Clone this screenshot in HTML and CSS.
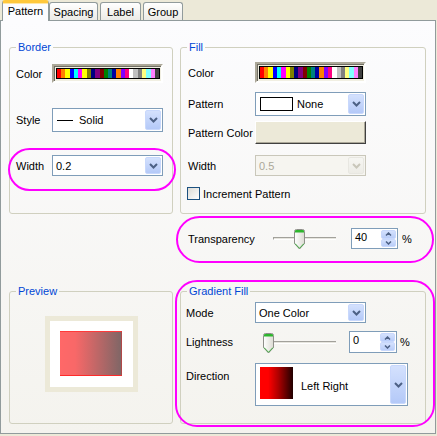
FILE: index.html
```html
<!DOCTYPE html>
<html>
<head>
<meta charset="utf-8">
<link rel="stylesheet" href="styles.css">
</head>
<body>
<div class="tabs">
  <div class="tab active">Pattern</div>
  <div class="tab t-spacing">Spacing</div>
  <div class="tab t-label">Label</div>
  <div class="tab t-group">Group</div>
</div>
<div class="panel">
  <fieldset class="group g-border">
    <legend>Border</legend>
    <div class="row b-color"><span class="lbl">Color</span><div class="swatch"><div class="stripes"></div></div></div>
    <div class="row b-style"><span class="lbl">Style</span>
      <div class="combo"><span class="line"></span><span class="val">Solid</span>
        <span class="ddbtn"><svg width="9" height="6" viewBox="0 0 9 6"><path d="M1 1l3.5 3.5L8 1" fill="none" stroke="#4D6185" stroke-width="2"/></svg></span></div>
    </div>
    <div class="row b-width"><span class="lbl">Width</span>
      <div class="combo"><span class="val pad">0.2</span>
        <span class="ddbtn"><svg width="9" height="6" viewBox="0 0 9 6"><path d="M1 1l3.5 3.5L8 1" fill="none" stroke="#4D6185" stroke-width="2"/></svg></span></div>
    </div>
  </fieldset>

  <fieldset class="group g-fill">
    <legend>Fill</legend>
    <div class="row f-color"><span class="lbl">Color</span><div class="swatch"><div class="stripes"></div></div></div>
    <div class="row f-pattern"><span class="lbl">Pattern</span>
      <div class="combo"><span class="pbox"></span><span class="val">None</span>
        <span class="ddbtn"><svg width="9" height="6" viewBox="0 0 9 6"><path d="M1 1l3.5 3.5L8 1" fill="none" stroke="#4D6185" stroke-width="2"/></svg></span></div>
    </div>
    <div class="row f-pcolor"><span class="lbl">Pattern Color</span><div class="pbtn"></div></div>
    <div class="row f-width"><span class="lbl">Width</span>
      <div class="combo disabled"><span class="val pad">0.5</span>
        <span class="ddbtn"><svg width="9" height="6" viewBox="0 0 9 6"><path d="M1 1l3.5 3.5L8 1" fill="none" stroke="#C9C7BA" stroke-width="2"/></svg></span></div>
    </div>
    <div class="row f-check"><span class="check"></span><span>Increment Pattern</span></div>
  </fieldset>

  <div class="row t-row">
    <span class="lbl t-lbl">Transparency</span>
    <div class="slider s-trans">
      <div class="track"></div>
      <svg class="thumb th-trans" width="11" height="21" viewBox="0 0 11 21"><defs><linearGradient id="tg1" x1="0" x2="1" y1="0" y2="0"><stop offset="0" stop-color="#FFFFFF"/><stop offset="1" stop-color="#DCDBD3"/></linearGradient></defs><path d="M0.5 2.5Q0.5 0.5 2.5 0.5H8.5Q10.5 0.5 10.5 2.5V14.5L5.5 20L0.5 14.5Z" fill="url(#tg1)" stroke="#8F8F8A"/><path d="M1 2Q1 1 2.5 1H8.5Q10 1 10 2V3.5H1Z" fill="#2DB52D"/><path d="M1 14.5L5.5 19.3L10 14.5" fill="none" stroke="#3CA83C"/></svg>
    </div>
    <div class="spin sp-trans"><span class="sval">40</span><span class="sbtns"><span class="sb"><svg width="7" height="4" viewBox="0 0 7 4"><path d="M1 3.5l2.5-2.5 2.5 2.5" fill="none" stroke="#4D6185" stroke-width="1.5"/></svg></span><span class="sb"><svg width="7" height="4" viewBox="0 0 7 4"><path d="M1 0.5l2.5 2.5 2.5-2.5" fill="none" stroke="#4D6185" stroke-width="1.5"/></svg></span></span></div>
    <span class="pct p-trans">%</span>
  </div>

  <fieldset class="group g-preview">
    <legend>Preview</legend>
    <div class="pv-frame"><div class="pv-rect"></div></div>
  </fieldset>

  <fieldset class="group g-grad">
    <legend>Gradient Fill</legend>
    <div class="row g-mode"><span class="lbl">Mode</span>
      <div class="combo"><span class="val pad">One Color</span>
        <span class="ddbtn"><svg width="9" height="6" viewBox="0 0 9 6"><path d="M1 1l3.5 3.5L8 1" fill="none" stroke="#4D6185" stroke-width="2"/></svg></span></div>
    </div>
    <div class="row g-light"><span class="lbl">Lightness</span>
      <div class="slider s-light">
        <div class="track"></div>
        <svg class="thumb th-light" width="11" height="21" viewBox="0 0 11 21"><defs><linearGradient id="tg2" x1="0" x2="1" y1="0" y2="0"><stop offset="0" stop-color="#FFFFFF"/><stop offset="1" stop-color="#DCDBD3"/></linearGradient></defs><path d="M0.5 2.5Q0.5 0.5 2.5 0.5H8.5Q10.5 0.5 10.5 2.5V14.5L5.5 20L0.5 14.5Z" fill="url(#tg2)" stroke="#8F8F8A"/><path d="M1 2Q1 1 2.5 1H8.5Q10 1 10 2V3.5H1Z" fill="#2DB52D"/><path d="M1 14.5L5.5 19.3L10 14.5" fill="none" stroke="#3CA83C"/></svg>
      </div>
      <div class="spin sp-light"><span class="sval">0</span><span class="sbtns"><span class="sb"><svg width="7" height="4" viewBox="0 0 7 4"><path d="M1 3.5l2.5-2.5 2.5 2.5" fill="none" stroke="#4D6185" stroke-width="1.5"/></svg></span><span class="sb"><svg width="7" height="4" viewBox="0 0 7 4"><path d="M1 0.5l2.5 2.5 2.5-2.5" fill="none" stroke="#4D6185" stroke-width="1.5"/></svg></span></span></div>
      <span class="pct p-light">%</span>
    </div>
    <div class="row g-dir"><span class="lbl dir-lbl">Direction</span>
      <div class="combo dcombo"><span class="dswatch"></span><span class="val dval">Left Right</span>
        <span class="ddbtn"><svg width="9" height="6" viewBox="0 0 9 6"><path d="M1 1l3.5 3.5L8 1" fill="none" stroke="#4D6185" stroke-width="2"/></svg></span></div>
    </div>
  </fieldset>

  <div class="mark m-width"></div>
  <div class="mark m-trans"></div>
  <div class="mark m-grad"></div>
</div>
</body>
</html>
```
FILE: styles.css
```css
html, body {
  margin: 0;
  padding: 0;
}
body {
  background: #ECE9D8;
  font-family: "Liberation Sans", Arial, sans-serif;
  font-size: 11px;
  color: #000;
  width: 437px;
  height: 436px;
  overflow: hidden;
}

/* tabs */
.tabs {
  display: flex;
  align-items: flex-end;
  height: 20px;
  padding-left: 2px;
}
.tab {
  box-sizing: border-box;
  height: 18px;
  border: 1px solid #919B9C;
  border-bottom: none;
  border-radius: 3px 3px 0 0;
  background: linear-gradient(#FFFFFF, #ECEBE6);
  display: flex;
  align-items: center;
  justify-content: center;
  padding-top: 1px;
}
.tab.active {
  position: relative;
  z-index: 2;
  width: 47px;
  height: 21px;
  margin-bottom: -1px;
  border-top: 3px solid #FFC83C;
  box-shadow: inset 0 1px 0 #FFE6A6;
  background: #FCFCFE;
  padding-top: 0;
  padding-bottom: 3px;
}
.t-spacing { width: 49px; }
.t-label { width: 41px; margin-left: 2px; }
.t-group { width: 40px; margin-left: 2px; }

/* panel */
.panel {
  position: relative;
  box-sizing: border-box;
  width: 436px;
  height: 414px;
  border: 1px solid #919B9C;
  background: linear-gradient(#FCFCFE, #F4F3EE);
  display: grid;
  grid-template-columns: 164px 246px;
  grid-template-rows: 173px 71px 139px;
  column-gap: 7px;
  padding: 20px 0 0 8px;
}

.group {
  box-sizing: border-box;
  margin: 0;
  min-width: 0;
  height: 100%;
  border: 1px solid #D0D0BF;
  border-radius: 3px;
  padding: 0;
}
.group legend {
  color: #0046D5;
  line-height: 12px;
  height: 12px;
  padding: 0 2px;
}
.g-border { grid-column: 1; grid-row: 1; padding-left: 6px; }
.g-fill { grid-column: 2; grid-row: 1; padding-left: 7px; }
.t-row { grid-column: 2; grid-row: 2; }
.g-preview { grid-column: 1; grid-row: 3; padding-left: 6px; }
.g-grad { grid-column: 2; grid-row: 3; padding-left: 5px; }
.g-fill legend { margin-left: -1px; }
.g-grad legend { margin-left: 1px; }

.row {
  display: flex;
  align-items: center;
}
.lbl { flex: none; }
.g-border .lbl { width: 36px; }
.g-fill .lbl { width: 67px; }
.g-grad .lbl { width: 69px; }

.b-color { margin-top: 11px; height: 19px; }
.b-style { margin-top: 25px; height: 24px; }
.b-width { margin-top: 23px; height: 21px; }

.f-color { margin-top: 9px; height: 21px; }
.f-pattern { margin-top: 9px; height: 24px; }
.f-pcolor { margin-top: 5px; height: 23px; }
.f-width { margin-top: 11px; height: 21px; }
.f-check { margin-top: 11px; height: 13px; margin-left: -1px; }

.t-row { margin-top: 14px; height: 21px; padding-left: 8px; align-self: start; }
.t-lbl { width: 85px; }

.g-mode { margin-top: 5px; height: 21px; }
.g-light { margin-top: 8px; height: 22px; }
.g-dir { margin-top: 10px; height: 43px; align-items: flex-start; }
.dir-lbl { padding-top: 7px; }

/* color swatch */
.swatch {
  box-sizing: border-box;
  width: 111px;
  height: 100%;
  border: 2px solid;
  border-color: #ACA899 #FFFFFF #FFFFFF #ACA899;
  box-shadow: inset 1px 1px 0 #716F64;
  background: #F1EFE2;
  padding: 2px 1px 2px 2px;
  display: flex;
}
.stripes {
  flex: 1;
  border: 1px solid #000;
  background: linear-gradient(to right,
    #FF0000 0 4.17%, #FF8000 4.17% 8.33%, #FFFF00 8.33% 12.5%, #0000FF 12.5% 16.67%,
    #00FFFF 16.67% 20.83%, #FF00FF 20.83% 25%, #FFFF00 25% 29.17%, #808000 29.17% 33.33%,
    #000080 33.33% 37.5%, #800080 37.5% 41.67%, #800000 41.67% 45.83%, #008000 45.83% 50%,
    #008080 50% 54.17%, #0000A0 54.17% 58.33%, #FF8000 58.33% 62.5%, #8000FF 62.5% 66.67%,
    #FF0080 66.67% 70.83%, #FFFFFF 70.83% 75%, #C0C0C0 75% 79.17%, #808080 79.17% 83.33%,
    #FFFF80 83.33% 87.5%, #80FFFF 87.5% 91.67%, #FF80FF 91.67% 95.83%, #404040 95.83% 100%);
}

/* combo */
.combo {
  box-sizing: border-box;
  width: 111px;
  height: 100%;
  border: 1px solid #7F9DB9;
  background: #FFFFFF;
  display: flex;
  align-items: center;
  padding: 1px;
}
.combo .val { flex: 1; }
.combo .pad { padding-left: 2px; }
.ddbtn {
  box-sizing: border-box;
  flex: none;
  width: 16px;
  align-self: stretch;
  border: 1px solid #C8D8FC;
  border-radius: 2px;
  background: linear-gradient(#D4E1FD, #B4C9F8);
  display: flex;
  align-items: center;
  justify-content: center;
}
.combo.disabled {
  border-color: #C9C7BA;
  background: #F6F5F0;
  color: #ACA899;
}
.combo.disabled .ddbtn {
  border-color: #E8E7E1;
  background: linear-gradient(#F6F6F2, #EDECE6);
}
.line {
  width: 16px;
  height: 1px;
  background: #000;
  margin: 0 6px 0 3px;
  flex: none;
}
.pbox {
  box-sizing: border-box;
  width: 33px;
  height: 14px;
  border: 1px solid #000;
  background: #fff;
  margin: 0 4px 0 3px;
  flex: none;
}
.dcombo { width: 153px; align-items: flex-start; }
.dswatch {
  flex: none;
  width: 33px;
  height: 32px;
  margin: 2px 8px 0 3px;
  background: linear-gradient(to right, #FF0000 25%, #B00000 55%, #200000 100%);
}
.dval { align-self: center; padding-top: 2px; }
.dcombo .ddbtn { align-self: stretch; }

/* pattern color button */
.pbtn {
  box-sizing: border-box;
  width: 111px;
  height: 100%;
  background: #ECE9D8;
  border: 1px solid;
  border-color: #FFFFFF #404040 #404040 #FFFFFF;
  box-shadow: inset -1px -1px 0 #ACA899;
}

/* checkbox */
.check {
  box-sizing: border-box;
  width: 13px;
  height: 13px;
  border: 1px solid #1C5180;
  background: linear-gradient(135deg, #DCDBD5, #FFFFFF);
  margin-right: 3px;
}

/* slider */
.slider {
  position: relative;
  flex: none;
  height: 100%;
  display: flex;
  align-items: center;
}
.s-trans { width: 63px; }
.s-light { width: 73px; margin-left: 8px; }
.track {
  box-sizing: border-box;
  width: 100%;
  height: 3px;
  border-top: 1px solid #A2A19B;
  border-left: 1px solid #A2A19B;
  border-bottom: 1px solid #FFFFFF;
  background: #E6E5DE;
}
.s-light .track { margin-left: 4px; }
.thumb { position: absolute; }
.th-trans { left: 21px; top: 1px; }
.th-light { left: 0; top: 2px; }

/* spin edit */
.spin {
  box-sizing: border-box;
  flex: none;
  height: 100%;
  border: 1px solid #7F9DB9;
  background: #fff;
  display: flex;
  padding: 1px;
}
.sp-trans { width: 47px; margin-left: 15px; }
.sp-light { width: 48px; margin-left: 13px; }
.sval { flex: 1; padding-left: 2px; line-height: 13px; padding-top: 1px; }
.sbtns {
  width: 15px;
  display: flex;
  flex-direction: column;
}
.sb {
  flex: 1;
  box-sizing: border-box;
  border: 1px solid #C8D8FC;
  border-radius: 2px;
  background: linear-gradient(#D4E1FD, #B9CDF9);
  display: flex;
  align-items: center;
  justify-content: center;
}
.pct { flex: none; }
.p-trans { margin-left: 4px; }
.p-light { margin-left: 3px; }

/* preview */
.pv-frame {
  box-sizing: border-box;
  width: 93px;
  height: 76px;
  margin: 19px 0 0 29px;
  border: 5px solid #ECE9D8;
  background: #fff;
  padding: 10px 11px 11px 10px;
}
.pv-rect {
  box-sizing: border-box;
  width: 62px;
  height: 45px;
  border-top: 1px solid #FF3A3A;
  border-bottom: 1px solid #FF2A2A;
  border-right: 1px solid #B04848;
  background: linear-gradient(to right, #FF6868, #F86868 25%, #806666);
}

/* annotation marks */
.mark {
  position: absolute;
  box-sizing: border-box;
  border: 2px solid #FF00FF;
}
.m-width { left: 7px; top: 127px; width: 168px; height: 43px; border-radius: 22px; }
.m-trans { left: 175px; top: 195px; width: 258px; height: 47px; border-radius: 24px; }
.m-grad { left: 174px; top: 259px; width: 260px; height: 147px; border-radius: 22px; }
```
